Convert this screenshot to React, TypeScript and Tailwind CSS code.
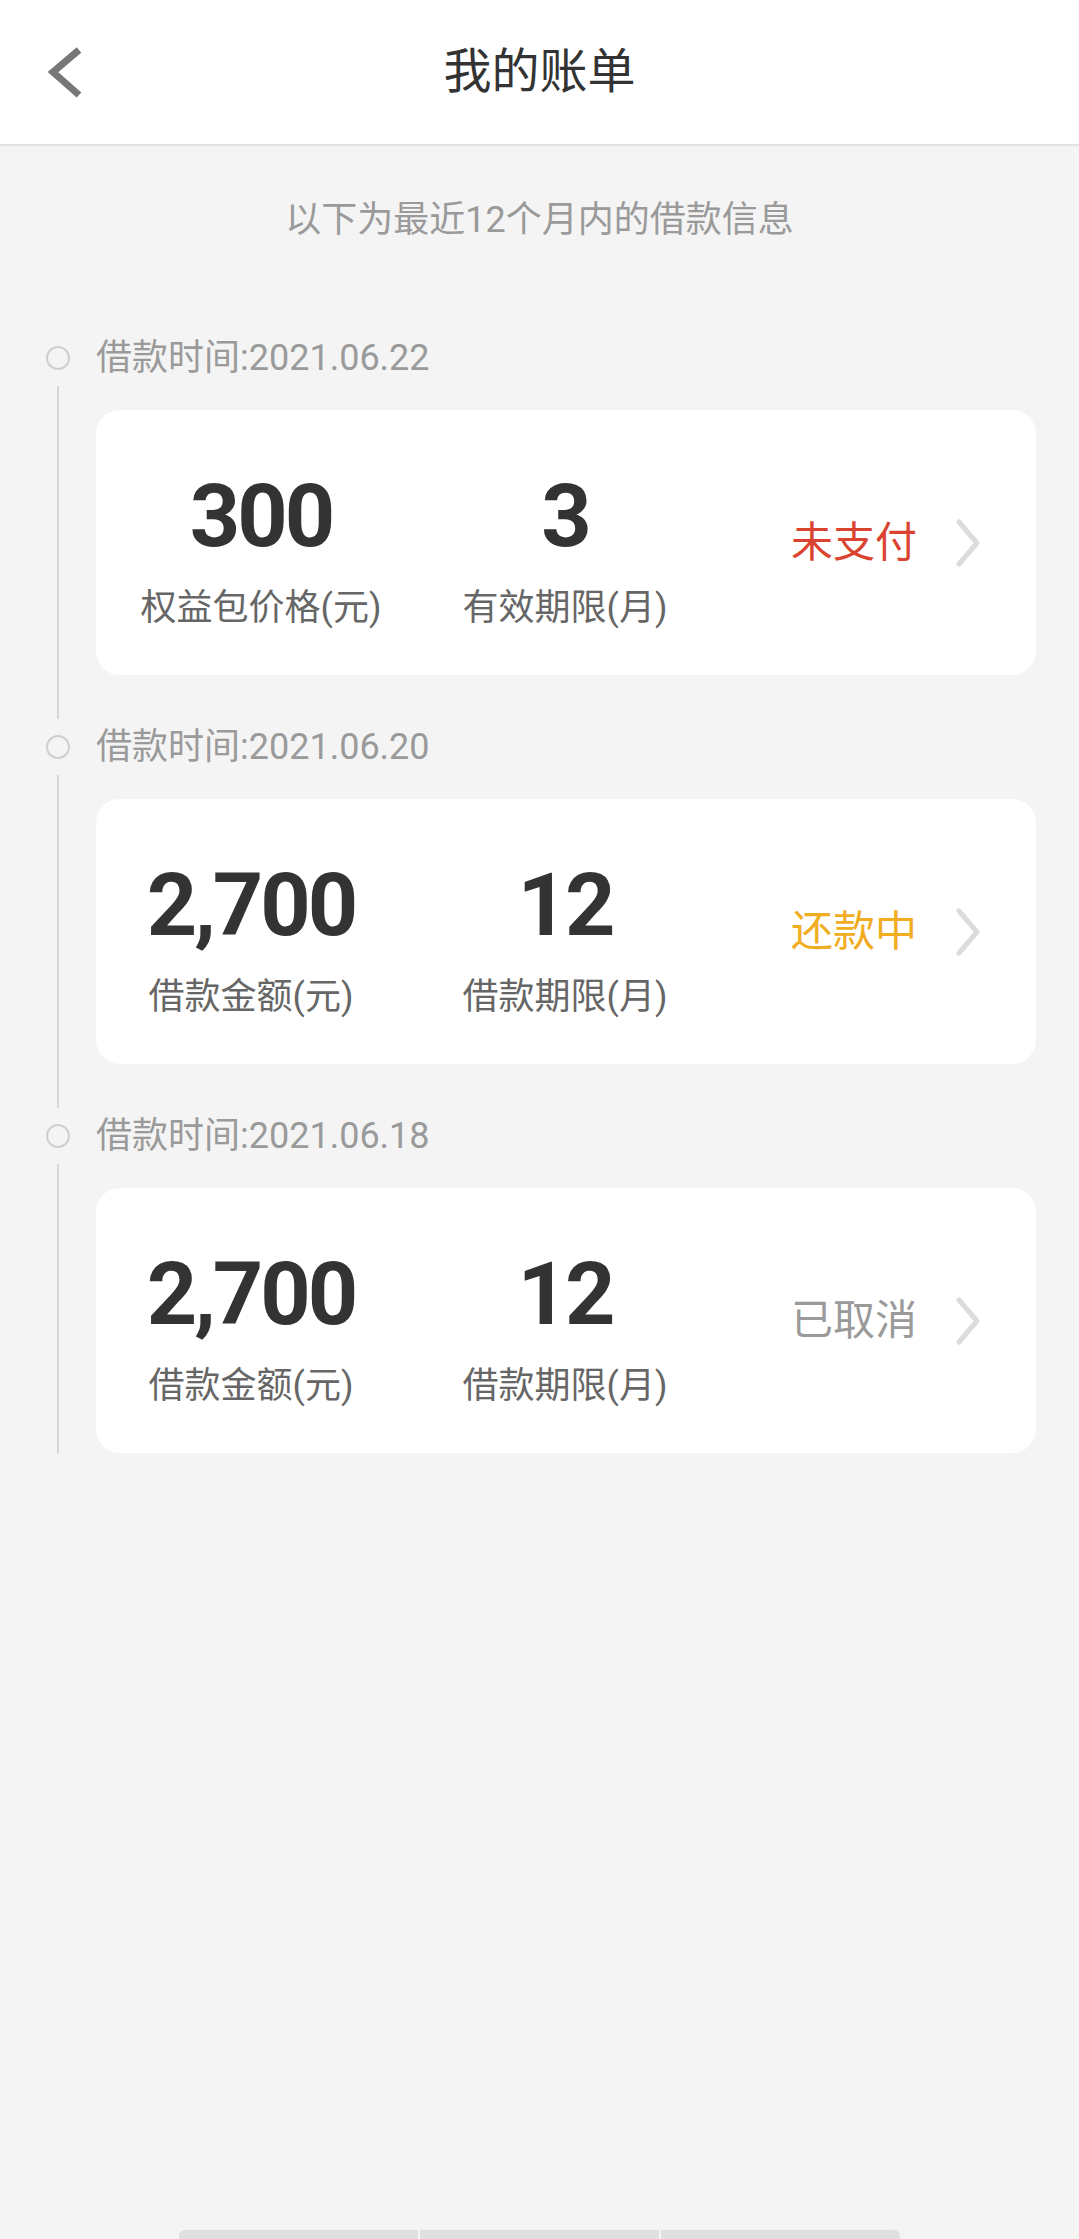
import React from 'react';

interface Bill {
  date: string;
  amount: string;
  amountLabel: string;
  term: string;
  termLabel: string;
  status: string;
  statusColor: string;
  wide: boolean;
}

const bills: Bill[] = [
  {
    date: '2021.06.22',
    amount: '300',
    amountLabel: '权益包价格(元)',
    term: '3',
    termLabel: '有效期限(月)',
    status: '未支付',
    statusColor: 'text-[#d9432f]',
    wide: true,
  },
  {
    date: '2021.06.20',
    amount: '2,700',
    amountLabel: '借款金额(元)',
    term: '12',
    termLabel: '借款期限(月)',
    status: '还款中',
    statusColor: 'text-[#f0ad1f]',
    wide: false,
  },
  {
    date: '2021.06.18',
    amount: '2,700',
    amountLabel: '借款金额(元)',
    term: '12',
    termLabel: '借款期限(月)',
    status: '已取消',
    statusColor: 'text-[#9a9a9a]',
    wide: false,
  },
];

const font = "font-['Roboto','Noto_Sans_CJK_SC',sans-serif]";

function BackIcon() {
  return (
    <svg width="40" height="56" viewBox="0 0 40 56" fill="none">
      <polyline points="33,5 7,27 33,50" stroke="#777" strokeWidth="7" strokeLinejoin="miter" />
    </svg>
  );
}

function Chevron() {
  return (
    <svg width="26" height="48" viewBox="0 0 26 48" fill="none">
      <polyline points="4,3 22,24 4,45" stroke="#dcdcdc" strokeWidth="5" strokeLinecap="round" strokeLinejoin="round" />
    </svg>
  );
}

function BillItem({ bill, last }: { bill: Bill; last: boolean }) {
  return (
    <div>
      <div className="flex h-[56px] items-center">
        <div className="ml-[46px] h-[24px] w-[24px] rounded-full border-2 border-[#cfcfcf]" />
        <span className="ml-[26px] text-[36px] leading-none text-[#9a9a9a]">借款时间:{bill.date}</span>
      </div>
      <div className={`ml-[57px] border-l-2 border-[#d6d6d6] pl-[37px] pt-[24px] ${last ? '' : 'pb-[44px]'}`}>
        <div className="flex h-[265px] w-[940px] items-center rounded-[24px] bg-white">
          <div className={`mt-[12px] flex w-[330px] flex-col items-center ${bill.wide ? '' : 'pr-[20px]'}`}>
            <span className="text-[88px] font-bold leading-[90px] tracking-[-3px] text-[#333]">{bill.amount}</span>
            <span className="mt-[29px] text-[36px] leading-[36px] text-[#666]">{bill.amountLabel}</span>
          </div>
          <div className="mt-[12px] flex w-[278px] flex-col items-center">
            <span className="text-[88px] font-bold leading-[90px] tracking-[-3px] text-[#333]">{bill.term}</span>
            <span className="mt-[29px] text-[36px] leading-[36px] text-[#666]">{bill.termLabel}</span>
          </div>
          <div className="ml-auto mr-[55px] flex items-center gap-[38px]">
            <span className={`text-[42px] leading-none ${bill.statusColor}`}>{bill.status}</span>
            <Chevron />
          </div>
        </div>
      </div>
    </div>
  );
}

export default function App() {
  return (
    <div className={`flex min-h-[2239px] w-full flex-col bg-[#f4f4f4] ${font}`}>
      <header className="grid h-[146px] grid-cols-[1fr_auto_1fr] items-center border-b-2 border-[#e2e2e2] bg-white">
        <div className="pl-[46px] pt-[2px]">
          <BackIcon />
        </div>
        <h1 className="text-[48px] leading-none text-[#333]">我的账单</h1>
        <div />
      </header>

      <p className="mt-[44px] h-[60px] text-center text-[36px] leading-[60px] text-[#9a9a9a]">
        以下为最近12个月内的借款信息
      </p>

      <div className="mt-[80px]">
        {bills.map((b, i) => (
          <BillItem key={i} bill={b} last={i === bills.length - 1} />
        ))}
      </div>

      <div className="mt-auto flex justify-center">
        <div className="flex h-[9px] w-[721px] gap-[2px] overflow-hidden rounded-t-[6px]">
          <div className="flex-1 bg-[#e0e0e0]" />
          <div className="flex-1 bg-[#e0e0e0]" />
          <div className="flex-1 bg-[#e0e0e0]" />
        </div>
      </div>
    </div>
  );
}
